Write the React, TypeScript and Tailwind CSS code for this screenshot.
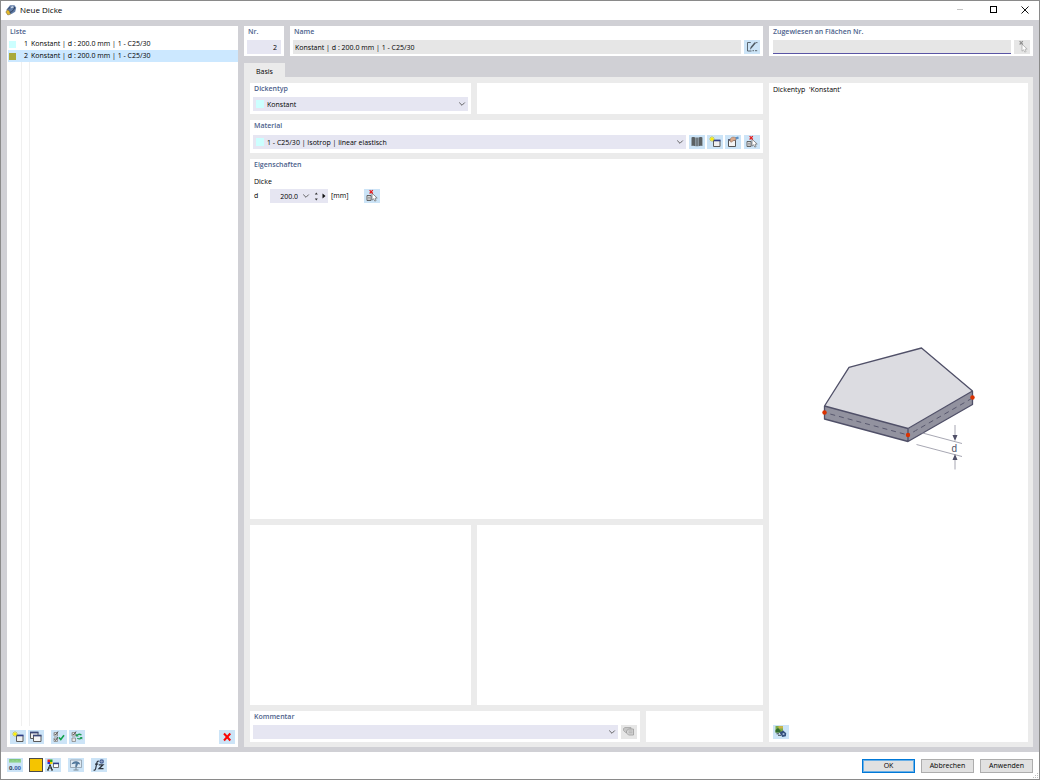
import type { ButtonHTMLAttributes, ReactNode } from "react";
import { clsx } from "clsx";

const rows = [
  { nr: 1, name: "Konstant | d : 200.0 mm | 1 - C25/30", swatch: "bg-[#ccffff]" },
  { nr: 2, name: "Konstant | d : 200.0 mm | 1 - C25/30", swatch: "bg-[#a9a93b]" },
];

/* ---------- icons, all on a 16 x 14 grid ---------- */

function Glyph({ children }: { children: ReactNode }) {
  return (
    <svg viewBox="0 0 16 14" className="block h-3.5 w-4" fill="none" aria-hidden="true">
      {children}
    </svg>
  );
}

function Spark() {
  return (
    <g stroke="#c9b800" strokeWidth=".6">
      <path d="M5 1v6M2 4h6M2.9 1.9l4.2 4.2M7.1 1.9L2.9 6.1" />
      <circle cx="5" cy="4" r="1.6" fill="#fff000" stroke="none" />
    </g>
  );
}

function NewIcon() {
  return (
    <Glyph>
      <path d="M6.500 5.500h6.500v6H6.500z" fill="#efefef" stroke="#5b5b5b" strokeWidth="1" />
      <path d="M6 4.600h7.500v1.700H6z" fill="#2f3f87" />
      <Spark />
    </Glyph>
  );
}

function CopyIcon() {
  return (
    <Glyph>
      <path d="M2.500 2.500h7.500v6H2.500z" fill="#eee" stroke="#5b5b5b" strokeWidth="1" />
      <path d="M2 1.600h8.500v1.800H2z" fill="#3a4777" />
      <path d="M5.500 5.500h7.500v6H5.500z" fill="#f6f6f6" stroke="#5b5b5b" strokeWidth="1" />
      <path d="M5 4.700h8.500v1.700H5z" fill="#3a4777" />
    </Glyph>
  );
}

function CheckAllIcon() {
  return (
    <Glyph>
      <path d="M3 2.500h3.500V6H3zM3 8h3.500v3.500H3z" fill="#e6e6e6" stroke="#888" strokeWidth=".8" />
      <path d="M3.500 3.700l1.100 1.300L7 1.500M3.500 9.200l1.100 1.300L7 7" stroke="#444" strokeWidth=".9" />
      <path d="M8 7.400l1.800 2.100L13 5.300" stroke="#0fa34a" strokeWidth="1.600" />
    </Glyph>
  );
}

function CheckSwapIcon() {
  return (
    <Glyph>
      <path d="M3 2.500h3.500V6H3zM3 8h3.500v3.500H3z" fill="#e6e6e6" stroke="#888" strokeWidth=".8" />
      <path d="M3.500 3.700l1.100 1.300L7 1.500" stroke="#444" strokeWidth=".9" />
      <path d="M8 5.500c1-1.400 3-1.400 4.500-.5M12.500 8c-1.200 1-2.700 1-4.200.2" stroke="#1f9c55" strokeWidth="1.300" />
      <path d="M7 3.800v2.800h2.800zM13.300 9.500V6.900h-2.800z" fill="#1f9c55" />
    </Glyph>
  );
}

function DeleteIcon() {
  return (
    <Glyph>
      <path d="M5 3.500l6.300 7M11.300 3.500L5 10.500" stroke="#fa0505" strokeWidth="2" />
    </Glyph>
  );
}

function RenameIcon() {
  return (
    <Glyph>
      <path d="M6.800 2.500H3.500v8.500h4" stroke="#4f5962" strokeWidth=".9" />
      <path d="M6 9.700l.6-2.600 4-4.900 1.200 1-4 4.900z" fill="#4f5962" />
      <path d="M8.500 10.700h1.500M11 10.700h2.200M11.500 2.600h2" stroke="#4f5962" strokeWidth=".9" />
    </Glyph>
  );
}

function PickIcon({ muted = false }: { muted?: boolean }) {
  return (
    <Glyph>
      {!muted && (
        <>
          <path d="M3 6.500h4v5H3z" fill="#e8e8e8" stroke="#555" strokeWidth=".9" />
          <path d="M4.200 8.300h1.600M4.200 9.900h1.600" stroke="#555" strokeWidth=".7" />
        </>
      )}
      <path
        d="M8 4.200v7l1.600-1.400 1.200 2.300 1.300-.6-1.100-2.300 2.200-.2z"
        fill="#fff"
        stroke={muted ? "#a4a4a4" : "#666"}
        strokeWidth=".7"
      />
      <path d="M5.600 1.200L8.800 4.500M8.800 1.200L5.600 4.500" stroke={muted ? "#8f8f8f" : "#e61919"} strokeWidth="1.200" />
    </Glyph>
  );
}

function LibraryIcon() {
  return (
    <Glyph>
      <path
        d="M2.500 2.500c1.600-.6 3-.5 4 .1v8.600c-1-.6-2.400-.7-4-.2zM6.900 2.600h.9v8.700h-.9zM8.200 2.600h.8v8.700h-.8zM9.400 2.600c1.100-.6 2.400-.7 4-.1V11c-1.600-.5-2.900-.4-4 .2z"
        fill="#5b6062"
      />
    </Glyph>
  );
}

function EditIcon() {
  return (
    <Glyph>
      <path d="M3.500 5h7v6.500h-7z" fill="#f4f4f4" stroke="#555" strokeWidth="1" />
      <path d="M3 4h8v1.600H3z" fill="#555d75" />
      <path d="M5 5c.5-2.200 2-3.200 4-2.800l2.200.5-.3 2.300-3.300.9-.6 1.200L5.500 7z" fill="#d9a98c" stroke="#8b6a58" strokeWidth=".5" />
      <path d="M10.500 2.300l2.700-.9.700 2.200-2.900 1z" fill="#5b8fc4" />
    </Glyph>
  );
}

function UnitsIcon() {
  return (
    <Glyph>
      <path d="M2 1h12v3.600H2z" fill="#8fd28c" />
      <path d="M4 1v1.600M6 1v1M8 1v1.600M10 1v1M12 1v1.600" stroke="#5fa45f" strokeWidth=".6" />
      <text x="2" y="11.500" fontSize="6" fontWeight="700" fill="#2f3a4a" className="font-['Open_Sans',sans-serif]">
        0.<tspan fill="#3d62a8">00</tspan>
      </text>
    </Glyph>
  );
}

function DisplayIcon() {
  return (
    <Glyph>
      <path d="M2.500 1.500H5V4H2.500z" fill="#e02020" />
      <path d="M5 1.500h2.500V4H5z" fill="#22a522" />
      <path d="M2.500 4H5v2H2.500z" fill="#3030d0" />
      <path d="M5 4h2.500v2H5z" fill="#f0d000" />
      <path d="M2.800 12l2.200-5.500L7.200 12M3.500 10h3M2 12h2M6 12h2" stroke="#222" strokeWidth="1" />
      <path d="M8.500 5.500h5v4h-5z" fill="#fff" stroke="#555" strokeWidth=".8" />
      <path d="M8 4.600h6v1.600H8z" fill="#2f3f87" />
    </Glyph>
  );
}

function ScreenIcon() {
  return (
    <Glyph>
      <path d="M2.500 2h11v7.500h-11z" fill="#dfeaf3" stroke="#8a9aa8" strokeWidth=".8" />
      <path d="M5.500 12h5M8 8V12" stroke="#7d8b97" strokeWidth="1" />
      <path d="M3.500 6.200c.8-2.400 3-3.500 5.300-2.900 2 .4 3.100 1.600 3.400 3.200L10 6l-1.200 3-1.600-.5.500-2.900z" fill="#54799c" />
    </Glyph>
  );
}

function FormulaIcon() {
  return (
    <Glyph>
      <path d="M2.600 12c1.300.5 1.900-.3 2.200-2l1-5c.3-1.500.9-2 2-1.700M4 6.200h3.200" stroke="#2d3540" strokeWidth="1.200" />
      <path d="M7.800 6.800h4.200L8 10.700h4.500" stroke="#2d3540" strokeWidth="1.200" />
      <circle cx="10.700" cy="3.500" r="2.300" fill="#465f94" />
      <path d="M9 3.500h3.400M10.700 1.800v3.400" stroke="#c3d0e6" strokeWidth=".4" />
    </Glyph>
  );
}

function CommentIcon() {
  return (
    <Glyph>
      <path d="M2.500 3.500l1.500-1h6v5H4.500l-2-2z" fill="#c6c6c6" stroke="#a5a5a5" strokeWidth=".8" />
      <path d="M5.500 6l2-2H12.500v6h-5l-2-2z" fill="#d6d6d6" stroke="#9a9a9a" strokeWidth=".8" />
      <path d="M7.500 6h4M7.500 7.800h4" stroke="#a0a0a0" strokeWidth=".7" />
    </Glyph>
  );
}

function RenderIcon() {
  return (
    <Glyph>
      <path d="M2.500 1h7.500v6.500H2.500z" fill="#7dab4a" />
      <path d="M5.500 1H10v2.500H5.500z" fill="#c9b44a" />
      <path d="M2.500 5L5 3l2.500 2.500v2h-5z" fill="#2f6b2f" />
      <path d="M6.500 7.500l3.700-2 3 2.800-.3 3-3.600.7z" fill="#34517e" />
      <circle cx="10.500" cy="9" r="1.100" fill="#a8bedd" />
      <path d="M3.500 8.800h2.500M5 10.300h3" stroke="#3d4653" strokeWidth="1" />
    </Glyph>
  );
}

function AppIcon() {
  return (
    <svg viewBox="0 0 12 12" className="size-3" fill="none" aria-hidden="true">
      <path d="M1.500 5.500L5 1.300l4.500-.1 1.700 2.500-1 4L6.500 10l-4-.8z" fill="#5f7ba6" />
      <path d="M3.500 4.500c2-1.800 5-2 6.500-.3M4.500 8.500c2.500-.5 4.500-2.500 5-5" stroke="#27344f" strokeWidth=".9" />
      <path d="M5 3l3-1 1 1.500-2.500.8z" fill="#c5d4ea" />
      <path d="M.8 8l2-2.500 1.800 2 .9 2.800-2.700.7z" fill="#e5b92b" stroke="#3c3c3c" strokeWidth=".4" />
    </svg>
  );
}

function Chevron({ className }: { className?: string }) {
  return (
    <svg viewBox="0 0 8 6" className={clsx("pointer-events-none h-1.5 w-2", className)} fill="none" aria-hidden="true">
      <path d="M1.200 1.500L4 4.300l2.800-2.800" stroke="#555" strokeWidth=".9" />
    </svg>
  );
}

/* ---------- building blocks ---------- */

interface IconButtonProps extends ButtonHTMLAttributes<HTMLButtonElement> {
  label: string;
}

function IconButton({ label, className, children, ...rest }: IconButtonProps) {
  return (
    <button
      type="button"
      aria-label={label}
      className={clsx("h-3.5 w-4 shrink-0 bg-[#cce4f7] disabled:bg-[#e6e6e6]", className)}
      {...rest}
    >
      {children}
    </button>
  );
}

function Panel({ className, children }: { className?: string; children?: ReactNode }) {
  return <section className={clsx("bg-white", className)}>{children}</section>;
}

const heading = "block h-3 pl-px text-[7px] leading-3 font-semibold text-[#4d5f8c]";

function Select({ id, value, swatch }: { id: string; value: string; swatch?: boolean }) {
  return (
    <div className="relative h-3.5 min-w-0 flex-1">
      <select
        id={id}
        className={clsx("block h-3.5 w-full appearance-none bg-[#e6e6f2] pt-px leading-[13px]", swatch && "pl-3.5")}
      >
        <option>{value}</option>
      </select>
      {swatch && <span className="pointer-events-none absolute top-[3px] left-[3px] size-2 bg-[#ccffff]" />}
      <Chevron className="absolute top-1 right-0.5" />
    </div>
  );
}

function SlabDrawing() {
  return (
    <svg viewBox="0 0 180 145" className="h-[145px] w-[180px]" fill="none" role="img" aria-label="d">
      <path d="M15.500 71L99.500 93.500 163.500 56v13.500l-64.500 37L15.500 84z" fill="#92929f" />
      <path d="M15.500 71L40 32.300l72.500-19.300 51 43L99 93.500z" fill="#dcdce1" />
      <path
        d="M15.500 71L40 32.300l72.500-19.300 51 43v13.500l-64.500 37L15.500 84zL99 93.500 163.500 56M99 93.500v13"
        stroke="#505068"
        strokeWidth="1.300"
        strokeLinejoin="round"
      />
      <path d="M15.500 77.500L99 100M99 100l64.500-37" stroke="#505068" strokeWidth=".9" strokeDasharray="5 4" strokeDashoffset="-6" />
      <path d="M106 96l47 12.500M107.500 109.500L153 121.500" stroke="#9090a0" strokeWidth=".8" />
      <path d="M146 90v14M146 121v13.500" stroke="#9090a0" strokeWidth=".8" />
      <path d="M143.500 100h5l-2.500 6zM143.500 125h5l-2.500-6z" fill="#505068" />
      <circle cx="15.500" cy="77.500" r="2.200" fill="#dc3200" />
      <circle cx="99" cy="100" r="2.200" fill="#dc3200" />
      <circle cx="163.500" cy="62.500" r="2.200" fill="#dc3200" />
      <text x="142.500" y="116.500" fontSize="10" fill="#505068" className="font-['Liberation_Sans',sans-serif]">
        d
      </text>
    </svg>
  );
}

/* ---------- sections ---------- */

function TitleBar() {
  return (
    <header className="flex h-[19px] shrink-0 items-start gap-[3px] pl-1">
      <div className="pt-[3px]"><AppIcon /></div>
      <h1 className="flex-1 pt-[3px] text-[8px] leading-3">Neue Dicke</h1>
      <button type="button" aria-label="Minimieren" disabled className="grid h-[17px] w-[30px] place-items-center">
        <span className="h-px w-1.5 bg-[#c4c4c4]" />
      </button>
      <button type="button" aria-label="Maximieren" className="grid h-[17px] w-[30px] place-items-center">
        <span className="size-[7px] border border-black" />
      </button>
      <button type="button" aria-label="Schließen" className="grid h-[17px] w-7 place-items-center">
        <svg viewBox="0 0 8 8" className="size-2" aria-hidden="true">
          <path d="M.5.5l7 7M7.500.5l-7 7" stroke="#111" strokeWidth="1" />
        </svg>
      </button>
    </header>
  );
}

function ListPanel() {
  return (
    <Panel className="flex w-[231px] shrink-0 flex-col">
      <h2 className={clsx(heading, "ml-0.5")}>Liste</h2>
      <div className="flex flex-1 flex-col pl-px">
        <ul>
          {rows.map(({ nr, name, swatch }) => (
            <li key={nr} className={clsx("flex h-3 items-center", nr === 2 && "bg-[#cce8ff]")}>
              <span className={clsx("ml-px size-[7px]", swatch)} />
              <span className="w-3 text-right">{nr}</span>
              <span className="pl-[3px]">{name}</span>
            </li>
          ))}
        </ul>
        <div className="ml-[13px] w-[9px] flex-1 border-x border-[#f0f0f0]" />
      </div>
      <div className="flex gap-0.5 px-[3px] pt-1 pb-[3px]">
        <IconButton label="Neu"><NewIcon /></IconButton>
        <IconButton label="Kopieren"><CopyIcon /></IconButton>
        <IconButton label="Alle auswählen" className="ml-[5px]"><CheckAllIcon /></IconButton>
        <IconButton label="Auswahl umkehren"><CheckSwapIcon /></IconButton>
        <IconButton label="Löschen" className="ml-auto"><DeleteIcon /></IconButton>
      </div>
    </Panel>
  );
}

function HeadRow() {
  return (
    <div className="flex h-[30px] shrink-0 gap-1.5">
      <Panel className="w-10 px-[3px]">
        <label htmlFor="nr" className={heading}>Nr.</label>
        <input id="nr" defaultValue="2" className="mt-0.5 block h-3.5 w-full bg-[#e6e6f2] pr-1 text-right" />
      </Panel>
      <Panel className="flex-1 px-[3px]">
        <label htmlFor="name" className={heading}>Name</label>
        <div className="mt-0.5 flex gap-[3px]">
          <input id="name" readOnly defaultValue="Konstant | d : 200.0 mm | 1 - C25/30" className="h-3.5 min-w-0 flex-1 bg-[#e6e6e6] px-0.5" />
          <IconButton label="Name bearbeiten"><RenameIcon /></IconButton>
        </div>
      </Panel>
      <Panel className="w-[264px] px-[3px]">
        <label htmlFor="assigned" className={heading}>Zugewiesen an Flächen Nr.</label>
        <div className="mt-0.5 flex gap-[3px] pl-px">
          <input id="assigned" readOnly className="h-3.5 min-w-0 flex-1 border-b border-[#5a55a5] bg-[#e6e6e6]" />
          <IconButton label="Flächen auswählen" disabled><PickIcon muted /></IconButton>
        </div>
      </Panel>
    </div>
  );
}

function PropertiesPanel() {
  return (
    <Panel className="flex-2 px-[3px]">
      <h2 className={heading}>Eigenschaften</h2>
      <p className="mt-1.5 h-2.5 pl-px leading-[10px]">Dicke</p>
      <div className="mt-0.5 flex h-3.5 items-center">
        <label htmlFor="d" className="w-[17px] pl-px">d</label>
        <div className="flex h-3.5 w-[58px] items-center bg-[#e6e6f2]">
          <input id="d" defaultValue="200.0" className="h-3.5 w-7 bg-transparent text-right" />
          <button type="button" aria-label="Werte" className="ml-1"><Chevron /></button>
          <button type="button" aria-label="Schrittweite" className="ml-1">
            <svg viewBox="0 0 5 9" className="h-[9px] w-[5px]" fill="#333" aria-hidden="true">
              <path d="M.8 2.500h3L2.300.5zM.8 6.500h3L2.300 8.500z" />
            </svg>
          </button>
          <button type="button" aria-label="Mehr" className="ml-[3px]">
            <svg viewBox="0 0 4 6" className="h-1.5 w-1" fill="#111" aria-hidden="true">
              <path d="M.5.500L3.500 3 .5 5.500z" />
            </svg>
          </button>
        </div>
        <span className="w-9 pl-[3px]">[mm]</span>
        <IconButton label="Dicke auswählen"><PickIcon /></IconButton>
      </div>
    </Panel>
  );
}

function BasisForm() {
  return (
    <form className="flex min-w-0 flex-1 flex-col gap-1.5" onSubmit={(e) => e.preventDefault()}>
      <div className="flex h-[31px] shrink-0 gap-1.5">
        <Panel className="w-[221px] px-[3px]">
          <label htmlFor="type" className={heading}>Dickentyp</label>
          <div className="mt-0.5 flex"><Select id="type" value="Konstant" swatch /></div>
        </Panel>
        <Panel className="flex-1" />
      </div>
      <Panel className="h-[33px] shrink-0 px-[3px]">
        <label htmlFor="material" className={heading}>Material</label>
        <div className="mt-[3px] flex gap-0.5">
          <Select id="material" value="1 - C25/30 | Isotrop | linear elastisch" swatch />
          <IconButton label="Bibliothek" className="ml-px"><LibraryIcon /></IconButton>
          <IconButton label="Neues Material"><NewIcon /></IconButton>
          <IconButton label="Material bearbeiten"><EditIcon /></IconButton>
          <IconButton label="Material auswählen" className="ml-px"><PickIcon /></IconButton>
        </div>
      </Panel>
      <PropertiesPanel />
      <div className="flex flex-1 gap-1.5">
        <Panel className="w-[221px]" />
        <Panel className="flex-1" />
      </div>
      <div className="flex h-[31px] shrink-0 gap-1.5">
        <Panel className="flex-1 px-[3px]">
          <label htmlFor="comment" className={heading}>Kommentar</label>
          <div className="mt-0.5 flex gap-[3px]">
            <Select id="comment" value="" />
            <IconButton label="Kommentare" disabled><CommentIcon /></IconButton>
          </div>
        </Panel>
        <Panel className="w-[117px]" />
      </div>
    </form>
  );
}

function DialogButton({ primary, children }: { primary?: boolean; children: ReactNode }) {
  return (
    <button
      type="button"
      className={clsx(
        "h-3.5 w-[53px] border bg-[#e1e1e1] text-center leading-3",
        primary ? "border-[#0078d7] ring-1 ring-[#6bb0e6] ring-inset" : "border-[#adadad]"
      )}
    >
      {children}
    </button>
  );
}

function Footer() {
  return (
    <footer className="flex h-[27px] shrink-0 items-start px-1.5 pt-1.5">
      <IconButton label="Einheiten"><UnitsIcon /></IconButton>
      <button type="button" aria-label="Farbe" className="ml-1.5 size-3.5 border border-[#4a4a4a] bg-[#f5c400]" />
      <IconButton label="Darstellung" className="ml-0.5"><DisplayIcon /></IconButton>
      <IconButton label="Ansicht" className="ml-[7px]"><ScreenIcon /></IconButton>
      <IconButton label="Formeln" className="ml-[7px]"><FormulaIcon /></IconButton>
      <div className="ml-auto flex gap-1.5 pt-px">
        <DialogButton primary>OK</DialogButton>
        <DialogButton>Abbrechen</DialogButton>
        <DialogButton>Anwenden</DialogButton>
      </div>
    </footer>
  );
}

export default function App() {
  return (
    <div className="relative flex h-screen flex-col border border-[#8a8a8a] bg-white font-['Open_Sans','Noto_Sans',sans-serif] text-[7px] leading-[10px] text-black">
      <TitleBar />
      <main className="flex min-h-0 flex-1 gap-1.5 bg-[#d0d0d5] px-1.5 pt-1.5 pb-[5px]">
        <ListPanel />
        <div className="flex min-w-0 flex-1 flex-col">
          <HeadRow />
          <div role="tablist" className="mt-[7px] flex h-3.5 shrink-0">
            <button type="button" role="tab" aria-selected="true" className="w-[41px] bg-[#ebebeb] pt-1 text-center">
              Basis
            </button>
          </div>
          <div className="flex min-h-0 flex-1 gap-1.5 bg-[#ebebeb] pt-1.5 pr-[5px] pb-[5px] pl-1.5">
            <BasisForm />
            <Panel className="flex w-[259px] flex-col px-1 pt-0.5 pb-[3px]">
              <p className="whitespace-pre">{"Dickentyp  'Konstant'"}</p>
              <div className="flex flex-1 items-center justify-center pb-1.5"><SlabDrawing /></div>
              <IconButton label="Grafik"><RenderIcon /></IconButton>
            </Panel>
          </div>
        </div>
      </main>
      <Footer />
      <svg viewBox="0 0 6 6" className="absolute right-0 bottom-0 size-1.5" fill="#bdbdbd" aria-hidden="true">
        <path d="M4 0h1v1H4zM2 2h1v1H2zM4 2h1v1H4zM0 4h1v1H0zM2 4h1v1H2zM4 4h1v1H4z" />
      </svg>
    </div>
  );
}
